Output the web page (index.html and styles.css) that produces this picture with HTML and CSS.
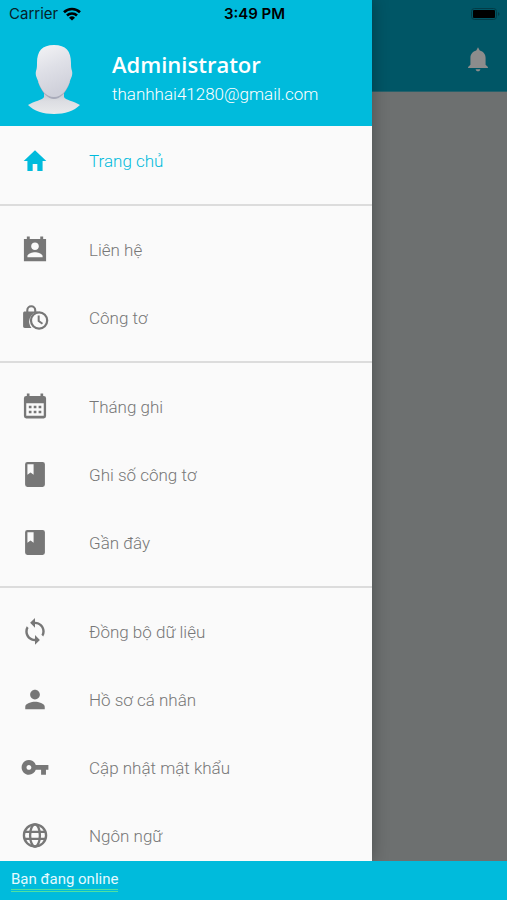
FILE: index.html
```html
<!DOCTYPE html>
<html lang="vi">
<head>
<meta charset="utf-8">
<meta name="viewport" content="width=device-width, initial-scale=1">
<title>Trang chủ</title>
<link rel="stylesheet" href="styles.css">
</head>
<body>
<div class="app">
  <main class="screen">
    <header class="topbar">
      <button class="bell" type="button" aria-label="Thông báo">
        <svg class="icon" viewBox="0 0 24 24"><path d="M12 22.500c1.100 0 2-.9 2-1.800h-4c0 .9.9 1.800 2 1.800zm6.500-5.500v-6c0-3.070-1.900-5.640-5-6.320L12 2l-1.500 2.680C7.400 5.360 5.500 7.920 5.500 11v6l-2 1.800v1h17v-1l-2-1.800z"/></svg>
      </button>
    </header>
  </main>

  <aside class="drawer">
    <header class="profile">
      <svg class="avatar" viewBox="0 0 54 72" aria-hidden="true">
        <defs>
          <linearGradient id="face" x1="0" y1="0" x2="0.3" y2="1">
            <stop offset="0" stop-color="#f4f4f6"/>
            <stop offset="0.5" stop-color="#dfe0e7"/>
            <stop offset="1" stop-color="#cfd0da"/>
          </linearGradient>
          <linearGradient id="bust" x1="0" y1="0" x2="0" y2="1">
            <stop offset="0" stop-color="#b4b6c2"/>
            <stop offset="0.5" stop-color="#dcdde2"/>
            <stop offset="1" stop-color="#e9eaec"/>
          </linearGradient>
        </defs>
        <path fill="url(#bust)" d="M17 44h20v9c1 3 10 4 16 8-6 6-15 9-26 9S7 67 1 61c6-4 15-5 16-8z"/>
        <path fill="#a9abba" d="M11 38c4 11 10 17 16 17s12-6 16-17z"/>
        <path fill="url(#face)" d="M27 1c12 0 17 6 17 18 0 3 0 5 1 8 1 4-1 7-2 10-3 9-8 16-16 16s-13-7-16-16c-1-3-3-6-2-10 1-3 1-5 1-8C10 7 15 1 27 1z"/>
      </svg>
      <div class="identity">
        <h1 class="name">Administrator</h1>
        <p class="email">thanhhai41280@gmail.com</p>
      </div>
    </header>
    <nav class="menu">
      <ul class="group">
        <li><a class="item active" href="#home"><svg class="icon" viewBox="0 0 24 24"><path d="M10 20.500v-6h4v6h4.500v-8.500h3.200L12 2.800 2.300 12h3.200v8.500z"/></svg><span>Trang chủ</span></a></li>
      </ul>
      <ul class="group">
        <li><a class="item" href="#contacts"><svg class="icon" viewBox="0 0 24 24"><path d="M21.500 2.500H19V.5h-2.500v2h-9V.5H5v2H2.500v19.200h19zM12 5.500c1.900 0 3.300 1.400 3.300 3.200S13.900 12 12 12s-3.300-1.500-3.300-3.300S10.100 5.500 12 5.500zm6.500 12.800h-13v-1c0-2.200 4.300-3.400 6.500-3.400s6.500 1.200 6.500 3.400z"/></svg><span>Liên hệ</span></a></li>
        <li><a class="item" href="#meters"><svg class="icon" viewBox="0 0 24 24"><path d="M9 20.500H3.300c-1 0-1.500-.6-1.500-1.500V8c0-1 .5-1.500 1.500-1.500h1.200V5.300a4.300 4.300 0 0 1 8.600 0v1.200h1.300v.4A8.300 8.300 0 0 0 9 20.500zM6.300 6.500h5V5.300a2.500 2.500 0 0 0-5 0z"/><path fill-rule="evenodd" d="M15.500 6.300a7.900 7.900 0 1 0 0 15.800 7.900 7.900 0 0 0 0-15.800zm0 1.900a6 6 0 1 1 0 12 6 6 0 0 1 0-12z"/><path d="M14.300 9.800H16v4.300l2.900 2.100-1 1.400-3.600-2.700z"/></svg><span>Công tơ</span></a></li>
      </ul>
      <ul class="group">
        <li><a class="item" href="#months"><svg class="icon" viewBox="0 0 24 24"><path fill-rule="evenodd" d="M19.500 2.500H19V.5h-2.300v2H7.300V.5H5v2h-.5a2 2 0 0 0-2 2v15.300a2 2 0 0 0 2 2h15a2 2 0 0 0 2-2V4.500a2 2 0 0 0-2-2zm0 17H4.500V8.800h15z"/><path d="M6.700 11h2.300v2H6.700zm4.200 0h2.300v2h-2.300zm4.200 0h2.300v2h-2.300zM6.700 15.300h2.300v2H6.700zm4.200 0h2.300v2h-2.300zm4.200 0h2.300v2h-2.300z"/></svg><span>Tháng ghi</span></a></li>
        <li><a class="item" href="#readings"><svg class="icon" viewBox="0 0 24 24"><path d="M18.500.8h-13a2 2 0 0 0-2 2v17.400a2 2 0 0 0 2 2h13a2 2 0 0 0 2-2V2.800a2 2 0 0 0-2-2zM5.500 2.800h5.300v8.900l-2.600-1.800-2.700 1.800z"/></svg><span>Ghi số công tơ</span></a></li>
        <li><a class="item" href="#recent"><svg class="icon" viewBox="0 0 24 24"><path d="M18.500.8h-13a2 2 0 0 0-2 2v17.400a2 2 0 0 0 2 2h13a2 2 0 0 0 2-2V2.800a2 2 0 0 0-2-2zM5.500 2.800h5.300v8.900l-2.600-1.800-2.700 1.800z"/></svg><span>Gần đây</span></a></li>
      </ul>
      <ul class="group">
        <li><a class="item" href="#sync"><svg class="icon" viewBox="0.500 1 23 23"><path d="M12 4V1L8 5l4 4V6c3.310 0 6 2.690 6 6 0 1.010-.25 1.970-.7 2.800l1.460 1.460A7.930 7.930 0 0 0 20 12c0-4.420-3.580-8-8-8zm0 14c-3.310 0-6-2.690-6-6 0-1.010.25-1.970.7-2.800L5.240 7.740A7.930 7.930 0 0 0 4 12c0 4.420 3.580 8 8 8v3l4-4-4-4v3z"/></svg><span>Đồng bộ dữ liệu</span></a></li>
        <li><a class="item" href="#profile"><svg class="icon" viewBox="0.500 1 23 23"><path d="M12 12c2.210 0 4-1.790 4-4s-1.790-4-4-4-4 1.790-4 4 1.790 4 4 4zm0 2c-2.670 0-8 1.340-8 4v2h16v-2c0-2.660-5.330-4-8-4z"/></svg><span>Hồ sơ cá nhân</span></a></li>
        <li><a class="item" href="#password"><svg class="icon" viewBox="0.500 1 23 23"><path d="M12.650 10C11.830 7.670 9.610 6 7 6c-3.310 0-6 2.690-6 6s2.690 6 6 6c2.610 0 4.830-1.670 5.650-4H17v4h4v-4h2v-4H12.650zM7 14c-1.100 0-2-.9-2-2s.9-2 2-2 2 .9 2 2-.9 2-2 2z"/></svg><span>Cập nhật mật khẩu</span></a></li>
        <li><a class="item" href="#language"><svg class="icon" viewBox="0 0.500 24 24"><g fill="none" stroke="currentColor" stroke-width="2"><circle cx="12" cy="12" r="9.500"/><ellipse cx="12" cy="12" rx="4.200" ry="9.500"/><path d="M3.200 9h17.600M3.200 15h17.600"/></g></svg><span>Ngôn ngữ</span></a></li>
      </ul>
    </nav>
  </aside>

  <div class="statusbar">
    <span class="carrier">Carrier
      <svg class="wifi" viewBox="0 0 18 14" aria-hidden="true"><g fill="none" stroke="currentColor" stroke-width="2.600"><path d="M1 5.200a11.500 11.500 0 0 1 16 0"/><path d="M4 8.500a7.200 7.200 0 0 1 10 0"/></g><path d="M9 13.600 6 10.700a4.300 4.300 0 0 1 6 0z"/></svg>
    </span>
    <span class="clock">3:49 PM</span>
    <svg class="battery" viewBox="0 0 29 12" aria-hidden="true"><rect x="0.500" y="0.500" width="25" height="11" rx="3" fill="none" stroke="#023c47"/><rect x="2" y="2" width="22" height="8" rx="1"/><path fill="#023c47" d="M27 4c2 1 2 3 0 4z"/></svg>
  </div>

  <footer class="connection"><span class="connection-text">Bạn đang online</span></footer>
</div>
</body>
</html>
```
FILE: styles.css
```css
* {
  box-sizing: border-box;
}

body {
  margin: 0;
  font-family: Roboto, "Noto Sans", sans-serif;
}

.app {
  position: relative;
  display: grid;
  grid-template-rows: minmax(0, 1fr) auto;
  height: 100vh;
  overflow: hidden;
}

.screen,
.drawer {
  grid-row: 1;
  grid-column: 1;
}

.screen {
  background: #6d7070;
}

.topbar {
  display: flex;
  justify-content: flex-end;
  padding: 45px 15px 18px;
  background: #005666;
  border-bottom: 1px solid #27616b;
}

.bell {
  display: flex;
  padding: 0;
  border: 0;
  background: none;
  color: #8c8c8c;
}

.icon {
  width: 28px;
  height: 28px;
  flex: none;
  fill: currentColor;
}

.drawer {
  z-index: 1;
  width: 73.4%;
  overflow: hidden;
  background: #fafafa;
  box-shadow: 0 0 16px rgba(0, 0, 0, 0.3);
}

.profile {
  display: flex;
  gap: 31px;
  padding: 44px 27px 10px;
  background: #00bbdc;
}

.avatar {
  width: 54px;
  height: 72px;
}

.identity {
  padding-top: 4px;
}

.name,
.email {
  margin: 0;
  color: #fff;
}

.name {
  font-family: "Open Sans", sans-serif;
  font-size: 22px;
  font-weight: 600;
  line-height: 32px;
}

.email {
  font-size: 17px;
  font-weight: 300;
  line-height: 28px;
}

.group {
  margin: 0;
  padding: 10px 0 9px;
  list-style: none;
}

.group:first-child {
  padding-top: 1px;
}

.group + .group {
  border-top: 2px solid #dcdcdc;
}

.item {
  display: flex;
  align-items: center;
  gap: 40px;
  height: 68px;
  padding: 0 21px;
  color: #777;
  font-size: 17px;
  font-weight: 300;
  text-decoration: none;
}

.item.active {
  color: #00bbdc;
}

.statusbar {
  position: absolute;
  z-index: 2;
  inset: 0 0 auto;
  display: grid;
  grid-template-columns: 1fr auto 1fr;
  align-items: center;
  height: 27px;
  padding: 0 7px 0 9px;
  color: #052229;
  font-family: Inter, sans-serif;
  font-size: 15px;
}

.carrier {
  display: flex;
  align-items: center;
  gap: 5px;
}

.wifi {
  width: 18px;
  height: 14px;
  color: #000;
}

.clock {
  color: #000;
  font-weight: 600;
}

.battery {
  width: 29px;
  height: 12px;
  justify-self: end;
}

.connection {
  z-index: 2;
  display: flex;
  padding: 9px 11px 8px;
  background: #00bbdc;
  color: #e4faff;
  font-size: 15px;
  line-height: 19px;
}

.connection-text {
  border-bottom: 3px double #4fe0a0;
}
```
